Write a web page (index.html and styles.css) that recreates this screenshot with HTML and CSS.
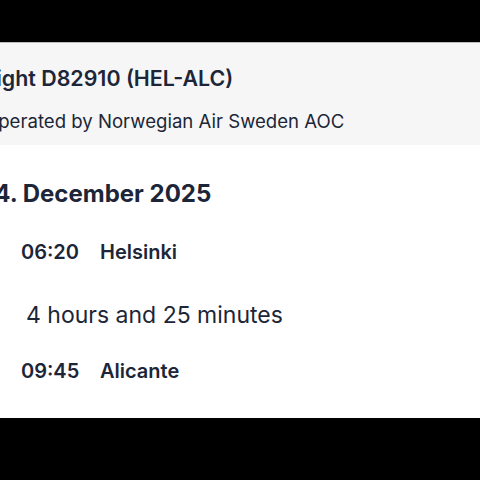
FILE: index.html
```html
<!DOCTYPE html>
<html>
<head>
<meta charset="utf-8">
<link rel="stylesheet" href="styles.css">
</head>
<body>
<div class="frame">
  <div class="card">
    <header class="head">
      <h1 class="title">Flight D82910 (HEL-ALC)</h1>
      <p class="operator">Operated by Norwegian Air Sweden AOC</p>
    </header>
    <section class="body">
      <h2 class="date">14. December 2025</h2>
      <div class="row">
        <span class="dot"></span>
        <span class="time">06:20</span>
        <span class="place">Helsinki</span>
      </div>
      <div class="duration">4 hours and 25 minutes</div>
      <div class="row">
        <span class="dot"></span>
        <span class="time">09:45</span>
        <span class="place">Alicante</span>
      </div>
    </section>
  </div>
</div>
</body>
</html>
```

FILE: styles.css
```css
html, body {
  margin: 0;
  padding: 0;
  background: #000;
  height: 480px;
  overflow: hidden;
}
.frame {
  padding-top: 42px;
  overflow: hidden;
  width: 480px;
}
.card {
  margin-left: -30px;
  width: 530px;
  background: #fff;
  color: #1c2638;
  font-family: Inter, "Noto Sans", sans-serif;
}
.head {
  background: #f6f6f6;
  border-top: 1px solid #bdbdbd;
  height: 102px;
  padding-left: 14px;
  box-sizing: content-box;
}
.title {
  margin: 0 0 0 -6px;
  padding-top: 21px;
  font-size: 21.4px;
  line-height: 28px;
  font-weight: 600;
}
.operator {
  margin: 0;
  padding-top: 17px;
  font-size: 18.6px;
  line-height: 24px;
  font-weight: 400;
}
.body {
  padding: 34px 0 0 14px;
  height: 239px;
}
.date {
  margin: 0;
  font-size: 24px;
  line-height: 30px;
  font-weight: 700;
}
.row {
  display: flex;
  align-items: center;
  height: 28px;
  margin-top: 29px;
}
.dot {
  width: 10px;
  height: 10px;
  border-radius: 50%;
  border: 2px solid #e6e8ec;
  box-sizing: border-box;
  margin-right: 27px;
}
.time {
  font-size: 20px;
  font-weight: 600;
  width: 79px;
}
.place {
  font-size: 20px;
  font-weight: 600;
}
.duration {
  margin-top: 35px;
  padding-left: 42px;
  font-size: 23px;
  line-height: 28px;
}
.row + .duration + .row {
  margin-top: 28px;
}
```
